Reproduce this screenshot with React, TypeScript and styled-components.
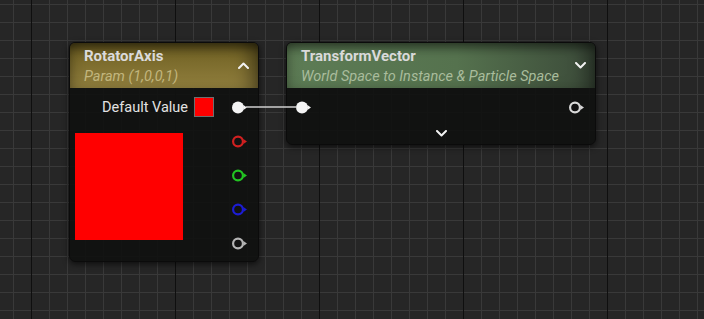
import React from 'react';
import styled, { createGlobalStyle } from 'styled-components';

const GlobalStyle = createGlobalStyle`
  html, body {
    margin: 0;
    padding: 0;
    background: #262626;
    overflow: hidden;
  }
  * {
    box-sizing: border-box;
  }
`;

const GraphCanvas = styled.div`
  position: relative;
  width: 704px;
  height: 319px;
  overflow: hidden;
  font-family: Roboto, 'Noto Sans', sans-serif;
  background: #262626;
`;

const GridBackdrop = styled.svg`
  position: absolute;
  left: 0;
  top: 0;
  display: block;
`;

const Node = styled.div<{ $left: number; $top: number; $width: number }>`
  position: absolute;
  left: ${(p) => p.$left}px;
  top: ${(p) => p.$top}px;
  width: ${(p) => p.$width}px;
  display: flex;
  flex-direction: column;
  border: 1px solid #0b0b0b;
  border-radius: 6px;
  overflow: hidden;
  background: rgba(16, 17, 16, 0.93);
  box-shadow: 0 2px 6px rgba(0, 0, 0, 0.65);
`;

const Header = styled.div<{ $tint: 'gold' | 'green' }>`
  height: 45px;
  display: flex;
  align-items: center;
  padding: 0 9px 0 14px;
  background: ${(p) =>
    p.$tint === 'gold'
      ? 'linear-gradient(180deg, #66581f 0%, #7b6b2c 40%, #917f3e 100%)'
      : 'linear-gradient(90deg, #5d7c55 0%, #55724e 55%, #3b4a39 100%)'};
  box-shadow: inset 0 9px 10px -4px rgba(0, 0, 0, 0.45),
    inset -16px 0 18px -8px rgba(0, 0, 0, 0.4),
    inset 10px 0 14px -8px rgba(0, 0, 0, 0.25);
`;

const HeaderText = styled.div`
  flex: 1;
  display: flex;
  flex-direction: column;
  padding-top: 3px;
`;

const Title = styled.div`
  font-size: 15px;
  font-weight: 700;
  line-height: 17px;
  color: #dadada;
`;

const Subtitle = styled.div<{ $color: string }>`
  font-size: 14.5px;
  font-style: italic;
  line-height: 18px;
  margin-top: 3px;
  color: ${(p) => p.$color};
  white-space: nowrap;
`;

const Body = styled.div`
  display: flex;
  padding: 2px 10px 1px 0;
`;

const LeftColumn = styled.div`
  flex: 1;
  display: flex;
  flex-direction: column;
`;

const ValueRow = styled.div`
  height: 34px;
  display: flex;
  align-items: center;
  justify-content: flex-end;
  gap: 6px;
  padding-right: 18px;
  font-size: 14.5px;
  color: #e2e2e2;
`;

const Swatch = styled.div`
  width: 20px;
  height: 20px;
  background: #ff0000;
  border: 1px solid #6e6e6e;
`;

const Preview = styled.div`
  width: 108px;
  height: 107px;
  margin: 9px 0 0 5px;
  background: #ff0000;
`;

const PinColumn = styled.div`
  display: flex;
  flex-direction: column;
`;

const PinSlot = styled.div`
  height: 34px;
  display: flex;
  align-items: center;
`;

const IORow = styled.div`
  height: 34px;
  display: flex;
  align-items: center;
  justify-content: space-between;
  padding: 0 10px 0 9px;
  margin-top: 2px;
`;

const FooterRow = styled.div`
  height: 20px;
  display: flex;
  align-items: center;
  justify-content: center;
  padding-bottom: 2px;
`;

const WireLayer = styled.svg`
  position: absolute;
  left: 0;
  top: 0;
  pointer-events: none;
`;

const Pin = ({ color, filled }: { color: string; filled?: boolean }) => (
  <svg width="16" height="13" viewBox="0 0 16 13">
    {filled ? (
      <circle cx="6" cy="6.5" r="6" fill={color} />
    ) : (
      <circle cx="6" cy="6.5" r="4.9" fill="#121212" stroke={color} strokeWidth="2.2" />
    )}
    <polygon points="11.4,4 15,6.5 11.4,9" fill={color} />
  </svg>
);

const Chevron = ({ up }: { up?: boolean }) => (
  <svg width="11" height="7" viewBox="0 0 11 7">
    <polyline
      points={up ? '1,6 5.5,1.5 10,6' : '1,1 5.5,5.5 10,1'}
      fill="none"
      stroke="#f2f2f2"
      strokeWidth="2"
      strokeLinecap="round"
      strokeLinejoin="round"
    />
  </svg>
);

const Grid = () => (
  <GridBackdrop width="704" height="319">
    <defs>
      <pattern id="minor" x="13" y="4" width="18" height="18" patternUnits="userSpaceOnUse">
        <path d="M0 0.5H18M0.5 0V18" stroke="#393939" strokeWidth="1" shapeRendering="crispEdges" />
      </pattern>
      <pattern id="major" x="31" y="0" width="144" height="319" patternUnits="userSpaceOnUse">
        <path d="M0.5 0V319" stroke="#0f0f0f" strokeWidth="1.4" shapeRendering="crispEdges" />
      </pattern>
    </defs>
    <rect width="704" height="319" fill="url(#minor)" />
    <rect width="704" height="319" fill="url(#major)" />
  </GridBackdrop>
);

const channelPins = ['#d02020', '#22c422', '#1c1cd2', '#b4b4b4'];

const App = () => (
  <>
    <GlobalStyle />
    <GraphCanvas>
      <Grid />

      <Node $left={69} $top={42} $width={190}>
        <Header $tint="gold">
          <HeaderText>
            <Title>RotatorAxis</Title>
            <Subtitle $color="#c2b67e">Param (1,0,0,1)</Subtitle>
          </HeaderText>
          <Chevron up />
        </Header>
        <Body>
          <LeftColumn>
            <ValueRow>
              Default Value
              <Swatch />
            </ValueRow>
            <Preview />
          </LeftColumn>
          <PinColumn>
            <PinSlot>
              <Pin color="#f4f4f4" filled />
            </PinSlot>
            {channelPins.map((c) => (
              <PinSlot key={c}>
                <Pin color={c} />
              </PinSlot>
            ))}
          </PinColumn>
        </Body>
      </Node>

      <Node $left={286} $top={42} $width={310}>
        <Header $tint="green">
          <HeaderText>
            <Title>TransformVector</Title>
            <Subtitle $color="#a9bc9c">World Space to Instance &amp; Particle Space</Subtitle>
          </HeaderText>
          <Chevron />
        </Header>
        <IORow>
          <Pin color="#f4f4f4" filled />
          <Pin color="#d8d8d8" />
        </IORow>
        <FooterRow>
          <Chevron />
        </FooterRow>
      </Node>

      <WireLayer width="704" height="319">
        <line x1="246" y1="107" x2="297" y2="107" stroke="#cfcfcf" strokeWidth="1.6" />
      </WireLayer>
    </GraphCanvas>
  </>
);

export default App;
